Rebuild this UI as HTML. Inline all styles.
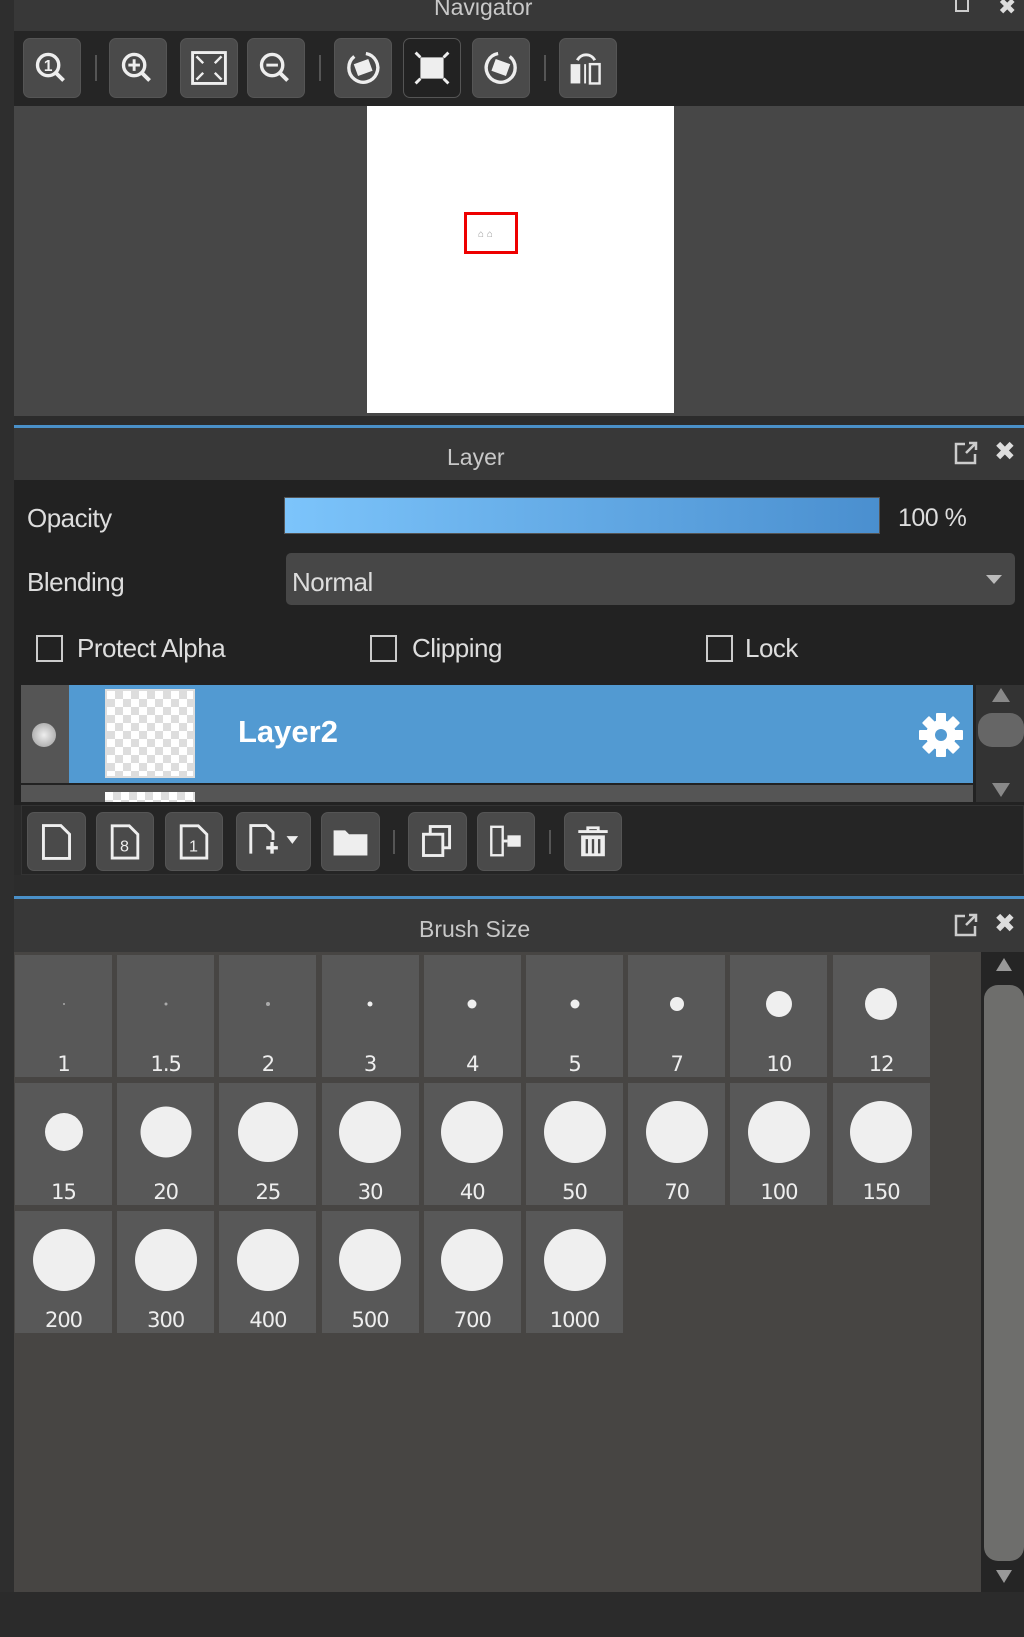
<!DOCTYPE html>
<html><head><meta charset="utf-8"><style>
*{margin:0;padding:0;box-sizing:border-box}
body{width:1024px;height:1637px;background:#2a2a2a;font-family:"Liberation Sans","DejaVu Sans",sans-serif;position:relative;overflow:hidden;color:#ddd}
.a{position:absolute}
.title{background:#383838;color:#c8c8c8;font-size:23px;text-align:center}
.btn{position:absolute;background:#4a4a4a;border-radius:7px;border:1px solid #555}
.btn svg{position:absolute;left:0;top:0;width:100%;height:100%}
.sep{position:absolute;width:2px;background:#555}
.cell{position:absolute;width:97px;height:122px;background:#585858}
.cell i{position:absolute;left:50%;border-radius:50%;background:#efefef;transform:translate(-50%,-50%)}
.cell span{position:absolute;left:0;right:0;text-align:center;top:97px;font-size:21px;color:#eee;font-family:"DejaVu Sans",sans-serif;letter-spacing:-1px}
.cb{position:absolute;width:27px;height:27px;border:2px solid #ccc}
.lbl{position:absolute;font-size:26px;color:#ddd;letter-spacing:-0.5px}
</style></head><body>
<div class="a" style="left:0;top:0;width:14px;height:1637px;background:#2e2e2e"></div>
<!-- navigator -->
<div class="a title" style="left:14px;top:0;width:1010px;height:31px"></div>
<div class="a" style="left:434px;top:-6px;font-size:23px;color:#c8c8c8">Navigator</div>
<div class="a" style="left:955px;top:0;width:14px;height:12px;border:2px solid #ccc;border-top:none"></div>
<div class="a" style="left:998px;top:-6px;font-size:22px;color:#ddd;font-weight:bold">✖</div>
<div class="a" style="left:14px;top:31px;width:1010px;height:75px;background:#252525"></div>
<div class="btn" style="left:23px;top:38px;width:58px;height:60px"><svg viewBox="0 0 58 60"><circle cx="25" cy="27" r="11" fill="none" stroke="#eee" stroke-width="3.5"/><line x1="33" y1="35" x2="41" y2="43" stroke="#eee" stroke-width="4"/><text x="25" y="33" font-size="16" fill="#eee" text-anchor="middle" font-weight="bold">1</text></svg></div>
<div class="sep" style="left:95px;top:55px;height:26px"></div>
<div class="btn" style="left:109px;top:38px;width:58px;height:60px"><svg viewBox="0 0 58 60"><circle cx="25" cy="27" r="11" fill="none" stroke="#eee" stroke-width="3.5"/><line x1="33" y1="35" x2="41" y2="43" stroke="#eee" stroke-width="4"/><path d="M19 27h12M25 21v12" stroke="#eee" stroke-width="3"/></svg></div>
<div class="btn" style="left:180px;top:38px;width:58px;height:60px"><svg viewBox="0 0 58 60"><rect x="12" y="14" width="34" height="32" fill="none" stroke="#eee" stroke-width="3"/><path d="M16 18l7 7M42 18l-7 7M16 42l7-7M42 42l-7-7" stroke="#eee" stroke-width="2.5"/></svg></div>
<div class="btn" style="left:247px;top:38px;width:58px;height:60px"><svg viewBox="0 0 58 60"><circle cx="25" cy="27" r="11" fill="none" stroke="#eee" stroke-width="3.5"/><line x1="33" y1="35" x2="41" y2="43" stroke="#eee" stroke-width="4"/><path d="M19 27h12" stroke="#eee" stroke-width="3"/></svg></div>
<div class="sep" style="left:319px;top:55px;height:26px"></div>
<div class="btn" style="left:334px;top:38px;width:58px;height:60px"><svg viewBox="0 0 58 60"><path d="M20 18a15 15 0 1 0 12-3" fill="none" stroke="#eee" stroke-width="3.5"/><rect x="21" y="23" width="16" height="13" fill="#eee" transform="rotate(-20 29 29)"/></svg></div>
<div class="btn" style="left:403px;top:38px;width:58px;height:60px;background:#222"><svg viewBox="0 0 58 60"><rect x="17" y="19" width="24" height="22" fill="#eee"/><path d="M12 14l5 5M46 14l-5 5M12 46l5-5M46 46l-5-5" stroke="#eee" stroke-width="3"/></svg></div>
<div class="btn" style="left:472px;top:38px;width:58px;height:60px"><svg viewBox="0 0 58 60"><path d="M38 18a15 15 0 1 1 -12-3" fill="none" stroke="#eee" stroke-width="3.5"/><rect x="21" y="23" width="16" height="13" fill="#eee" transform="rotate(20 29 29)"/></svg></div>
<div class="sep" style="left:544px;top:55px;height:26px"></div>
<div class="btn" style="left:559px;top:38px;width:58px;height:60px"><svg viewBox="0 0 58 60"><rect x="11" y="26" width="10" height="20" fill="#eee"/><rect x="31" y="26" width="10" height="20" fill="none" stroke="#eee" stroke-width="2.5"/><path d="M18 22a10 10 0 0 1 18 0" fill="none" stroke="#eee" stroke-width="3"/><line x1="26" y1="26" x2="26" y2="46" stroke="#eee" stroke-width="2"/></svg></div>
<div class="a" style="left:14px;top:106px;width:1010px;height:310px;background:#474747"></div>
<div class="a" style="left:367px;top:106px;width:307px;height:307px;background:#fff"></div>
<div class="a" style="left:464px;top:212px;width:54px;height:42px;border:3px solid #e00"></div>
<div class="a" style="left:478px;top:229px;font-size:10px;color:#999">⌂ ⌂</div>
<div class="a" style="left:14px;top:416px;width:1010px;height:10px;background:#2c2c2c"></div>
<div class="a" style="left:14px;top:425px;width:1010px;height:3px;background:#4a90c8"></div>
<!-- layer -->
<div class="a title" style="left:14px;top:428px;width:1010px;height:52px"></div>
<div class="a" style="left:447px;top:444px;font-size:23px;color:#c8c8c8">Layer</div>
<svg class="a" style="left:953px;top:440px" width="26" height="26" viewBox="0 0 26 26"><path d="M12 4H3v19h19v-9" fill="none" stroke="#ccc" stroke-width="2.5"/><path d="M13 13L23 3M16 3h7v7" fill="none" stroke="#ccc" stroke-width="2.5"/></svg>
<div class="a" style="left:994px;top:436px;font-size:26px;color:#ddd;font-weight:bold">✖</div>
<div class="a" style="left:14px;top:480px;width:1010px;height:325px;background:#222"></div>
<div class="lbl" style="left:27px;top:503px">Opacity</div>
<div class="a" style="left:284px;top:497px;width:596px;height:37px;background:linear-gradient(90deg,#7cc4fb,#4a8fcf);border:1px solid #555"></div>
<div class="lbl" style="left:898px;top:504px;font-size:25px">100 %</div>
<div class="lbl" style="left:27px;top:567px">Blending</div>
<div class="a" style="left:286px;top:553px;width:729px;height:52px;background:#474747;border-radius:5px"></div>
<div class="lbl" style="left:292px;top:567px">Normal</div>
<div class="a" style="left:986px;top:575px;border-left:8px solid transparent;border-right:8px solid transparent;border-top:9px solid #bbb"></div>
<div class="cb" style="left:36px;top:635px"></div><div class="lbl" style="left:77px;top:633px">Protect Alpha</div>
<div class="cb" style="left:370px;top:635px"></div><div class="lbl" style="left:412px;top:633px">Clipping</div>
<div class="cb" style="left:706px;top:635px"></div><div class="lbl" style="left:745px;top:633px">Lock</div>
<div class="a" style="left:21px;top:685px;width:48px;height:98px;background:#555"></div>
<div class="a" style="left:32px;top:723px;width:24px;height:24px;border-radius:50%;background:radial-gradient(#eee,#999)"></div>
<div class="a" style="left:69px;top:685px;width:904px;height:98px;background:#529ad2"></div>
<div class="a" style="left:105px;top:689px;width:90px;height:89px;border:2px solid #ddd;background:repeating-conic-gradient(#ddd 0 25%,#fff 0 50%) 0 0/16px 16px"></div>
<div class="a" style="left:238px;top:714px;font-size:31px;font-weight:bold;color:#fff">Layer2</div>
<svg class="a" style="left:917px;top:711px" width="48" height="48" viewBox="0 0 48 48"><g fill="#fff"><rect x="19" y="2" width="10" height="44" rx="1"/><rect x="19" y="2" width="10" height="44" rx="1" transform="rotate(45 24 24)"/><rect x="19" y="2" width="10" height="44" rx="1" transform="rotate(90 24 24)"/><rect x="19" y="2" width="10" height="44" rx="1" transform="rotate(135 24 24)"/><circle cx="24" cy="24" r="15"/></g><circle cx="24" cy="24" r="6" fill="#529ad2"/></svg>
<div class="a" style="left:21px;top:785px;width:952px;height:17px;background:#555"></div>
<div class="a" style="left:105px;top:792px;width:90px;height:10px;background:repeating-conic-gradient(#ddd 0 25%,#fff 0 50%) 0 0/16px 16px"></div>
<div class="a" style="left:976px;top:685px;width:48px;height:117px;background:#333"></div>
<div class="a" style="left:992px;top:688px;border-left:9px solid transparent;border-right:9px solid transparent;border-bottom:14px solid #888"></div>
<div class="a" style="left:978px;top:713px;width:46px;height:34px;border-radius:14px;background:#666"></div>
<div class="a" style="left:992px;top:783px;border-left:9px solid transparent;border-right:9px solid transparent;border-top:14px solid #888"></div>
<div class="a" style="left:21px;top:805px;width:1003px;height:70px;background:#252525;border:1px solid #333"></div>
<div class="btn" style="left:27px;top:812px;width:59px;height:59px"><svg viewBox="0 0 59 59"><path d="M16 13h18l9 9v25H16z" fill="none" stroke="#eee" stroke-width="3"/></svg></div>
<div class="btn" style="left:96px;top:812px;width:58px;height:59px"><svg viewBox="0 0 59 59"><path d="M16 13h18l9 9v25H16z" fill="none" stroke="#eee" stroke-width="3"/><text x="29" y="40" font-size="17" fill="#eee" text-anchor="middle">8</text></svg></div>
<div class="btn" style="left:165px;top:812px;width:58px;height:59px"><svg viewBox="0 0 59 59"><path d="M16 13h18l9 9v25H16z" fill="none" stroke="#eee" stroke-width="3"/><text x="29" y="40" font-size="17" fill="#eee" text-anchor="middle">1</text></svg></div>
<div class="btn" style="left:236px;top:812px;width:75px;height:59px"><svg viewBox="0 0 75 59"><path d="M14 42V13h16l7 7v8" fill="none" stroke="#eee" stroke-width="3"/><path d="M30 36h12M36 30v12" stroke="#eee" stroke-width="3.5"/><path d="M51 24h12l-6 8z" fill="#eee"/></svg></div>
<div class="btn" style="left:321px;top:812px;width:59px;height:59px"><svg viewBox="0 0 59 59"><path d="M12 18h12l4 4h19v22H12z" fill="#eee"/></svg></div>
<div class="sep" style="left:393px;top:830px;height:24px"></div>
<div class="btn" style="left:408px;top:812px;width:59px;height:59px"><svg viewBox="0 0 59 59"><rect x="22" y="14" width="20" height="22" fill="none" stroke="#eee" stroke-width="3"/><rect x="15" y="22" width="20" height="22" fill="#4a4a4a" stroke="#eee" stroke-width="3"/></svg></div>
<div class="btn" style="left:477px;top:812px;width:58px;height:59px"><svg viewBox="0 0 59 59"><rect x="14" y="14" width="12" height="30" fill="none" stroke="#eee" stroke-width="2.5"/><rect x="31" y="23" width="14" height="12" fill="#eee"/><path d="M26 29h5" stroke="#eee" stroke-width="3"/></svg></div>
<div class="sep" style="left:549px;top:830px;height:24px"></div>
<div class="btn" style="left:564px;top:812px;width:58px;height:59px"><svg viewBox="0 0 59 59"><path d="M14 19h31M24 19v-4h11v4" fill="none" stroke="#eee" stroke-width="3"/><path d="M17 23h25v22H17z" fill="#eee"/><path d="M23 27v15M29.5 27v15M36 27v15" stroke="#4a4a4a" stroke-width="2.5"/></svg></div>
<div class="a" style="left:14px;top:875px;width:1010px;height:21px;background:#2c2c2c"></div>
<div class="a" style="left:14px;top:896px;width:1010px;height:3px;background:#4a90c8"></div>
<!-- brush -->
<div class="a title" style="left:14px;top:899px;width:1010px;height:53px"></div>
<div class="a" style="left:419px;top:916px;font-size:23px;color:#c8c8c8">Brush Size</div>
<svg class="a" style="left:953px;top:912px" width="26" height="26" viewBox="0 0 26 26"><path d="M12 4H3v19h19v-9" fill="none" stroke="#ccc" stroke-width="2.5"/><path d="M13 13L23 3M16 3h7v7" fill="none" stroke="#ccc" stroke-width="2.5"/></svg>
<div class="a" style="left:994px;top:908px;font-size:26px;color:#ddd;font-weight:bold">✖</div>
<div class="a" style="left:14px;top:952px;width:967px;height:640px;background:#474543"></div>
<div class="a" style="left:981px;top:952px;width:43px;height:640px;background:#252525"></div>
<div class="a" style="left:996px;top:958px;border-left:8px solid transparent;border-right:8px solid transparent;border-bottom:13px solid #999"></div>
<div class="a" style="left:984px;top:985px;width:40px;height:576px;border-radius:14px;background:#6e6e6c"></div>
<div class="a" style="left:996px;top:1570px;border-left:8px solid transparent;border-right:8px solid transparent;border-top:13px solid #999"></div>
<div id="g"></div>
<div class="a" style="left:0;top:1592px;width:1024px;height:45px;background:#2b2b2b"></div>
<script>
var rows=[[["1",2],["1.5",3],["2",4],["3",5],["4",9],["5",9],["7",14],["10",26],["12",32]],
[["15",38],["20",51],["25",60],["30",62],["40",62],["50",62],["70",62],["100",62],["150",62]],
[["200",62],["300",62],["400",62],["500",62],["700",62],["1000",62]]];
var h="";rows.forEach(function(r,ri){r.forEach(function(c,ci){
h+='<div class="cell" style="left:'+(15+ci*102.2)+'px;top:'+(955+ri*128)+'px"><i style="top:49px;width:'+c[1]+'px;height:'+c[1]+'px'+(c[1]<5?';background:#aaa':'')+'"></i><span>'+c[0]+'</span></div>';});});
document.getElementById("g").innerHTML=h;
</script>
</body></html>
